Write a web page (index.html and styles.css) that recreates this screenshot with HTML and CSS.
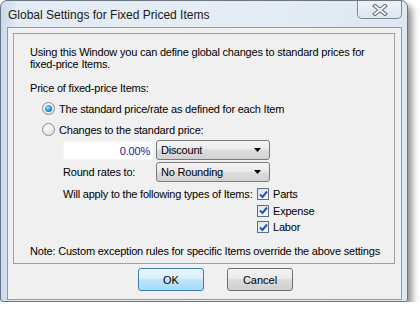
FILE: index.html
```html
<!DOCTYPE html>
<html lang="en">
<head>
    <meta charset="UTF-8">
    <title>Global Settings for Fixed Priced Items</title>
    <link rel="stylesheet" href="styles.css">
</head>
<body>
    <div class="window">
        <div class="titlebar">
            <span class="title">Global Settings for Fixed Priced Items</span>
            <div class="close-btn">
                <svg width="16" height="12" viewBox="0 0 16 12">
                    <path d="M3 2 L13 10 M13 2 L3 10" stroke="#5a6472" stroke-width="4" stroke-linecap="square"/>
                    <path d="M3 2 L13 10 M13 2 L3 10" stroke="#f4f6f9" stroke-width="2" stroke-linecap="square"/>
                </svg>
            </div>
        </div>
        <div class="client">
            <div class="group">
                <p class="intro">Using this Window you can define global changes to standard prices for<br>fixed-price Items.</p>
                <p class="label">Price of fixed-price Items:</p>
                <div class="option">
                    <span class="radio checked"><span class="dot"></span></span>
                    <span>The standard price/rate as defined for each Item</span>
                </div>
                <div class="option">
                    <span class="radio"></span>
                    <span>Changes to the standard price:</span>
                </div>
                <div class="field-row">
                    <div class="amount">0.00%</div>
                    <div class="combo">
                        <span>Discount</span>
                        <svg width="7" height="4" viewBox="0 0 7 4"><path d="M0 0 H7 L3.5 4 Z" fill="#000"/></svg>
                    </div>
                </div>
                <div class="field-row">
                    <div class="field-label">Round rates to:</div>
                    <div class="combo">
                        <span>No Rounding</span>
                        <svg width="7" height="4" viewBox="0 0 7 4"><path d="M0 0 H7 L3.5 4 Z" fill="#000"/></svg>
                    </div>
                </div>
                <div class="apply">
                    <div class="apply-label">Will apply to the following types of Items:</div>
                    <div class="checks">
                        <div class="check-row"><span class="checkbox"><svg width="9" height="9" viewBox="0 0 9 9"><path d="M1 4.5 L3.5 7 L8 1.5" fill="none" stroke="#2a4fc0" stroke-width="2"/></svg></span>Parts</div>
                        <div class="check-row"><span class="checkbox"><svg width="9" height="9" viewBox="0 0 9 9"><path d="M1 4.5 L3.5 7 L8 1.5" fill="none" stroke="#2a4fc0" stroke-width="2"/></svg></span>Expense</div>
                        <div class="check-row"><span class="checkbox"><svg width="9" height="9" viewBox="0 0 9 9"><path d="M1 4.5 L3.5 7 L8 1.5" fill="none" stroke="#2a4fc0" stroke-width="2"/></svg></span>Labor</div>
                    </div>
                </div>
                <p class="note">Note: Custom exception rules for specific Items override the above settings</p>
            </div>
            <div class="buttons">
                <button class="btn default">OK</button>
                <button class="btn">Cancel</button>
            </div>
        </div>
    </div>
</body>
</html>
```

FILE: styles.css
```css
body {
    margin: 0;
    background: #ffffff;
    font-family: "Liberation Sans", Arial, sans-serif;
    font-size: 11px;
    letter-spacing: -0.2px;
    color: #000;
}
.window {
    width: 408px;
    height: 302px;
    box-sizing: border-box;
    border: 1px solid #6b7582;
    border-radius: 7px 7px 3px 3px;
    padding: 0 5px 1px 6px;
    background: linear-gradient(90deg, #c9d9ec 0%, #e3ebf4 4%, #e6edf5 50%, #dfe8f2 100%);
    box-shadow: 4px 5px 7px rgba(0, 0, 0, 0.45);
}
.titlebar {
    display: flex;
    align-items: flex-start;
    height: 26px;
}
.title {
    font-size: 12px;
    letter-spacing: 0;
    color: #1a1a1a;
    padding: 7px 0 0 1px;
}
.close-btn {
    margin-left: auto;
    width: 43px;
    height: 17px;
    border: 1px solid #7d8793;
    border-top: none;
    border-radius: 0 0 5px 5px;
    background: linear-gradient(#eef2f7, #dfe7f0);
    display: flex;
    align-items: center;
    justify-content: center;
}
.client {
    height: 273px;
    box-sizing: border-box;
    border: 1px solid #8f9aa6;
    background: #f0f0f0;
    padding: 5px 6px 0 5px;
}
.group {
    height: 231px;
    box-sizing: border-box;
    border: 1px solid #a0a0a0;
    padding: 12px 0 0 16px;
    white-space: nowrap;
}
p {
    margin: 0;
}
.intro {
    line-height: 12px;
}
.label {
    margin-top: 12px;
    line-height: 13px;
}
.option {
    display: flex;
    align-items: center;
    gap: 4px;
    height: 21px;
    padding-left: 12px;
}
.option:first-of-type {
    margin-top: 3px;
}
.radio {
    width: 13px;
    height: 13px;
    box-sizing: border-box;
    border-radius: 50%;
    border: 1px solid #8a8c8e;
    background: radial-gradient(circle at 40% 35%, #ffffff, #d6d8da);
    display: flex;
    align-items: center;
    justify-content: center;
}
.dot {
    width: 7px;
    height: 7px;
    border-radius: 50%;
    background: radial-gradient(circle at 40% 35%, #9fe3ff, #2a8fd2 55%, #0e4f86);
}
.field-row {
    display: flex;
    align-items: center;
    padding-left: 33px;
    margin-bottom: 2px;
}
.field-row:first-of-type {
    margin-top: 1px;
}
.amount {
    width: 90px;
    height: 19px;
    box-sizing: border-box;
    background: #fff;
    border: 1px solid #f6f6f6;
    color: #1a1a8c;
    text-align: right;
    padding: 3px 2px 0 0;
    margin-right: 3px;
}
.field-label {
    width: 93px;
}
.combo {
    width: 114px;
    height: 20px;
    box-sizing: border-box;
    border: 1px solid #7a7a7a;
    border-radius: 3px;
    background: linear-gradient(#f4f4f4 0%, #ebebeb 45%, #dddddd 50%, #d1d1d1 100%);
    display: flex;
    align-items: center;
    justify-content: space-between;
    padding: 0 8px 0 4px;
}
.apply {
    display: flex;
    padding-left: 33px;
    margin-top: 4px;
}
.apply-label {
    width: 194px;
    line-height: 17px;
}
.check-row {
    display: flex;
    align-items: center;
    gap: 4px;
    height: 16.5px;
}
.checkbox {
    width: 12px;
    height: 12px;
    box-sizing: border-box;
    border: 1px solid #5c6f88;
    background: linear-gradient(135deg, #dde3ea, #fafbfc);
    display: flex;
    align-items: center;
    justify-content: center;
}
.note {
    margin-top: 9px;
}
.buttons {
    display: flex;
    gap: 23px;
    padding: 4px 0 0 125px;
}
.btn {
    width: 66px;
    height: 23px;
    font-family: "Liberation Sans", Arial, sans-serif;
    font-size: 11px;
    color: #000;
    border: 1px solid #707070;
    border-radius: 3px;
    background: linear-gradient(#f3f3f3 0%, #ebebeb 45%, #dddddd 50%, #cfcfcf 100%);
    padding: 0;
}
.btn.default {
    border-color: #3c7fb1;
    background: linear-gradient(#eaf6fd 0%, #d9f0fc 45%, #bee6fd 50%, #a7d9f5 100%);
}
```
